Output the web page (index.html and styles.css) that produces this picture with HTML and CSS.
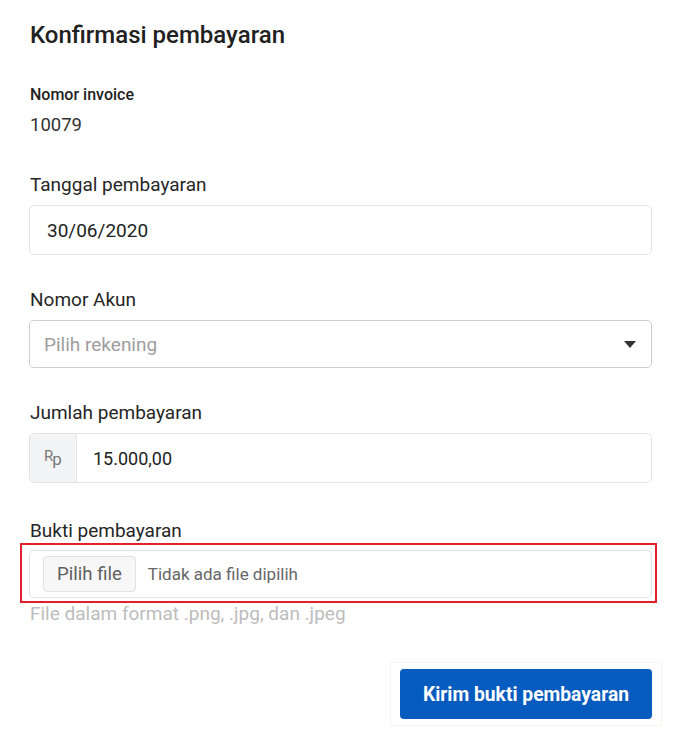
FILE: index.html
```html
<!DOCTYPE html>
<html>
<head>
<meta charset="utf-8">
<link rel="stylesheet" href="styles.css">
</head>
<body>
<div class="page">
  <h1 class="title">Konfirmasi pembayaran</h1>
  <div class="invoice">
    <div class="invoice-label">Nomor invoice</div>
    <div class="invoice-value">10079</div>
  </div>
  <div class="field first">
    <div class="label">Tanggal pembayaran</div>
    <div class="input"><span class="value">30/06/2020</span></div>
  </div>
  <div class="field">
    <div class="label">Nomor Akun</div>
    <div class="input select"><span class="placeholder">Pilih rekening</span><span class="caret"></span></div>
  </div>
  <div class="field">
    <div class="label">Jumlah pembayaran</div>
    <div class="input group"><span class="addon"><span class="rp-r">R</span><span class="rp-p">p</span></span><span class="value">15.000,00</span></div>
  </div>
  <div class="field file-field">
    <div class="label">Bukti pembayaran</div>
    <div class="highlight">
      <div class="input file"><span class="file-btn">Pilih file</span><span class="file-text">Tidak ada file dipilih</span></div>
    </div>
    <div class="help">File dalam format .png, .jpg, dan .jpeg</div>
  </div>
  <div class="actions">
    <div class="btn-wrap"><span class="btn">Kirim bukti pembayaran</span></div>
  </div>
</div>
</body>
</html>
```
FILE: styles.css
```css
* { box-sizing: border-box; }
body { margin: 0; background: #fff; font-family: Roboto, "Noto Sans", sans-serif; color: #212121; }
.page { padding: 20px 40px 0 29px; width: 692px; }
.title { margin: 0 0 0 1px; font-size: 24px; font-weight: 500; line-height: 30px; color: #212121; }
.invoice { margin-top: 35px; padding-left: 1px; }
.invoice-label { font-size: 16px; font-weight: 500; line-height: 20px; color: #222; }
.invoice-value { font-size: 18.5px; line-height: 22px; margin-top: 9px; color: #333; }
.field { margin-top: 33px; }
.field.first { margin-top: 37px; }
.label { font-size: 19px; line-height: 24px; color: #262626; padding-left: 1px; margin-bottom: 8px; }
.input { height: 50px; border: 1px solid #e3e3e3; border-radius: 5px; display: flex; align-items: center; font-size: 19px; }
.input .value { padding-left: 17px; color: #222; }
.select { height: 48px; border-color: #cfcfcf; justify-content: space-between; padding: 0 15px 0 14px; }
.placeholder { color: #9e9e9e; }
.caret { width: 0; height: 0; border-left: 6px solid transparent; border-right: 6px solid transparent; border-top: 7px solid #333; }
.group { overflow: hidden; }
.group .value { padding-left: 16px; font-size: 18px; }
.addon { width: 47px; align-self: stretch; display: flex; align-items: center; justify-content: center; background: #f3f4f6; border-right: 1px solid #e3e3e3; color: #7a7a7a; font-size: 16px; }
.rp-r { font-size: 15px; position: relative; top: -2px; }
.rp-p { font-size: 17px; margin-left: -1px; position: relative; top: 1px; }
.file-field { margin-top: 36px; }
.file-field .label { margin-bottom: 0; }
.highlight { margin: 0 -5px 0 -9px; border: 2px solid #e21f2b; padding: 5px 3px 3px 7px; }
.file { height: 48px; padding: 0 13px; }
.file-btn { height: 36px; padding: 0 13px; display: flex; align-items: center; background: #f7f7f7; border: 1px solid #e1e1e1; border-radius: 4px; color: #5f5f5f; font-size: 18.6px; }
.file-text { margin-left: 12px; font-size: 17px; color: #666; }
.help { margin-top: 0; font-size: 19px; color: #bdbdbd; line-height: 22px; padding-left: 1px; }
.actions { display: flex; justify-content: flex-end; margin-top: 37px; }
.btn-wrap { border: 1px solid #f6f4f0; padding: 6px 9px 6px 9px; margin-right: -10px; }
.btn { display: flex; align-items: center; justify-content: center; width: 252px; height: 50px; background: #065bbe; border-radius: 4px; color: #fff; font-weight: 700; font-size: 19.3px; }
```
